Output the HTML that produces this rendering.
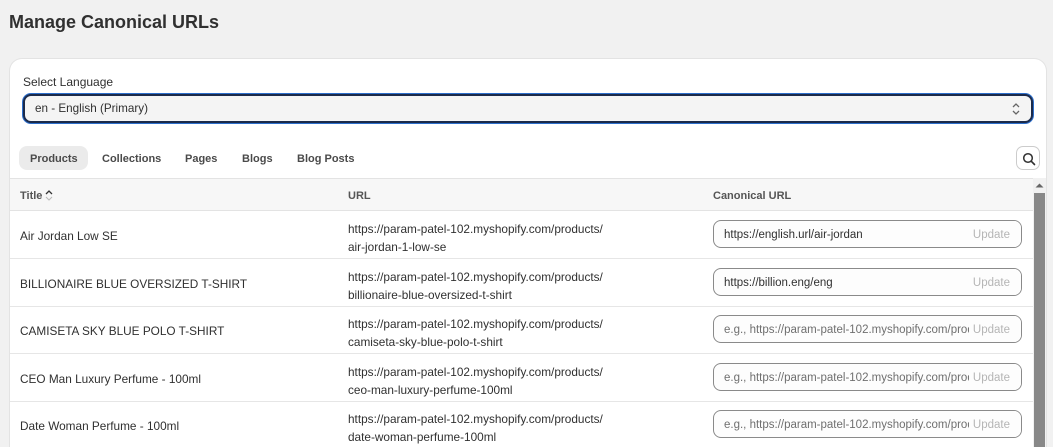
<!DOCTYPE html>
<html><head><meta charset="utf-8"><style>
*{box-sizing:border-box;margin:0;padding:0}
html,body{width:1053px;height:447px;overflow:hidden}
body{background:#f1f1f1;font-family:"Liberation Sans",Arial,sans-serif;color:#303030;position:relative}
.abs{position:absolute}
h1{position:absolute;left:9px;top:12px;font-size:18px;font-weight:bold;color:#303030}
.card{position:absolute;left:10px;top:59px;width:1036px;height:388px;background:#fff;border-radius:12px 12px 0 0;box-shadow:0 0 0 1px #e3e3e3;overflow:hidden}
.lbl{left:13px;top:16px;font-size:12px;color:#303030}
.sel{left:13px;top:35px;width:1010px;height:29px;border:2px solid #1b2a4a;border-radius:8px;background:#f4f4f4;font-size:11.7px;padding:6px 0 0 10px;box-shadow:0 0 0 1px #2c6ecb}
.tab{top:89px;height:23px;font-size:11px;font-weight:bold;color:#4a4a4a;padding-top:5px}
.tabsel{left:9px;top:87px;width:69px;height:24px;background:#ebebeb;border-radius:8px}
.srch{left:1006px;top:87px;width:24px;height:24px;border:1px solid #ccc;border-radius:7px;background:#fff}
.thead{left:0;top:119px;width:1023px;height:33px;background:#f7f7f7;border-top:1px solid #e3e3e3;border-bottom:1px solid #e3e3e3;font-size:11px;font-weight:bold;color:#555}
.row{left:0;width:1023px;height:48px;border-bottom:1px solid #e6e6e6;font-size:11.8px;color:#303030}
.t{position:absolute;left:10px;top:18px}
.u{position:absolute;left:338px;top:9px;line-height:18px}
.in{position:absolute;left:703px;top:9px;width:309px;height:28px;border:1px solid #8a8a8a;border-radius:8px;padding:8px 0 0 10px;font-size:11.5px;white-space:nowrap;overflow:hidden;background:#fdfdfd}
.in .up{position:absolute;right:0;top:0;height:26px;padding:8px 11px 0 4px;color:#b5b5b5;background:#fdfdfd}
.ph{color:#6f6f6f}
.track{left:1023px;top:119px;width:13px;height:280px;background:#f1f1f1}
.thumb{left:1024px;top:134px;width:11px;height:270px;background:#888}
</style></head><body>
<h1>Manage Canonical URLs</h1>
<div class="card">
<div class="abs lbl">Select Language</div>
<div class="abs sel">en - English (Primary)
<svg class="abs" style="right:10px;top:6px" width="10" height="14" viewBox="0 0 10 14"><path d="M2 5l3-3 3 3M2 9l3 3 3-3" fill="none" stroke="#666" stroke-width="1.3"/></svg></div>
<div class="abs tabsel"></div>
<div class="abs tab" style="left:20px">Products</div>
<div class="abs tab" style="left:92px">Collections</div>
<div class="abs tab" style="left:175px">Pages</div>
<div class="abs tab" style="left:232px">Blogs</div>
<div class="abs tab" style="left:287px">Blog Posts</div>
<div class="abs srch"><svg class="abs" style="left:5px;top:5px" width="14" height="14" viewBox="0 0 14 14"><circle cx="6" cy="6" r="4.3" fill="none" stroke="#303030" stroke-width="1.5"/><path d="M9.2 9.2l3.3 3.3" stroke="#303030" stroke-width="1.6" stroke-linecap="round"/></svg></div>
<div class="abs thead"><span class="abs" style="left:10px;top:11px">Title</span>
<svg class="abs" style="left:35px;top:10px" width="8" height="13" viewBox="0 0 8 13"><path d="M1 5l3-3 3 3" fill="none" stroke="#333" stroke-width="1.3"/><path d="M1 8l3 3 3-3" fill="none" stroke="#bbb" stroke-width="1.1"/></svg>
<span class="abs" style="left:338px;top:11px">URL</span><span class="abs" style="left:703px;top:11px">Canonical URL</span></div>
<div class="abs row" style="top:152px"><span class="t">Air Jordan Low SE</span><span class="u">https://param-patel-102.myshopify.com/products/<br>air-jordan-1-low-se</span><div class="in">https://english.url/air-jordan<span class="up">Update</span></div></div>
<div class="abs row" style="top:200px"><span class="t">BILLIONAIRE BLUE OVERSIZED T-SHIRT</span><span class="u">https://param-patel-102.myshopify.com/products/<br>billionaire-blue-oversized-t-shirt</span><div class="in">https://billion.eng/eng<span class="up">Update</span></div></div>
<div class="abs row" style="top:247px"><span class="t">CAMISETA SKY BLUE POLO T-SHIRT</span><span class="u">https://param-patel-102.myshopify.com/products/<br>camiseta-sky-blue-polo-t-shirt</span><div class="in"><span class="ph">e.g., https://param-patel-102.myshopify.com/products</span><span class="up">Update</span></div></div>
<div class="abs row" style="top:295px"><span class="t">CEO Man Luxury Perfume - 100ml</span><span class="u">https://param-patel-102.myshopify.com/products/<br>ceo-man-luxury-perfume-100ml</span><div class="in"><span class="ph">e.g., https://param-patel-102.myshopify.com/products</span><span class="up">Update</span></div></div>
<div class="abs row" style="top:342px"><span class="t">Date Woman Perfume - 100ml</span><span class="u">https://param-patel-102.myshopify.com/products/<br>date-woman-perfume-100ml</span><div class="in"><span class="ph">e.g., https://param-patel-102.myshopify.com/products</span><span class="up">Update</span></div></div>
<div class="abs track"></div>
<svg class="abs" style="left:1025px;top:123px" width="9" height="6" viewBox="0 0 9 6"><path d="M0.5 5.5L4.5 1.5 8.5 5.5Z" fill="#666"/></svg>
<div class="abs thumb"></div>
</div>
</body></html>
